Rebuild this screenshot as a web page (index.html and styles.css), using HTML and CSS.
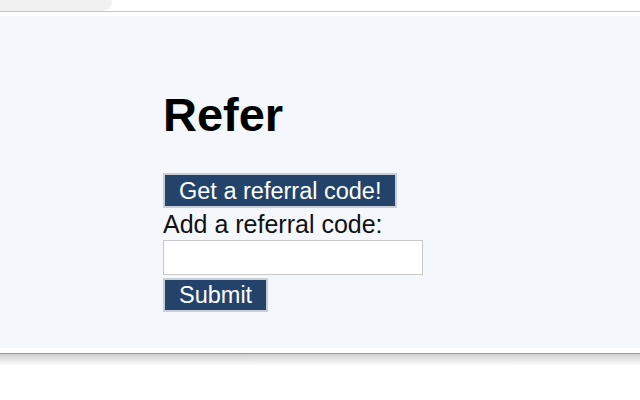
FILE: index.html
```html
<!DOCTYPE html>
<html>
<head>
<meta charset="utf-8">
<link rel="stylesheet" href="styles.css">
</head>
<body>
<div class="topbar"><div class="tab"></div></div>
<div class="frame">
  <main class="panel">
    <h1 class="title">Refer</h1>
    <button class="btn btn-get">Get a referral code!</button>
    <label class="label" for="code">Add a referral code:</label>
    <input class="input" id="code" type="text">
    <button class="btn btn-submit">Submit</button>
  </main>
</div>
<div class="shadow"></div>
</body>
</html>
```
FILE: styles.css
```css
html, body {
  margin: 0;
  padding: 0;
  background: #ffffff;
  width: 640px;
  height: 400px;
  overflow: hidden;
  font-family: "Liberation Sans", Arial, sans-serif;
}
.topbar {
  height: 11px;
  border-bottom: 1px solid #c6c6c6;
}
.tab {
  width: 112px;
  height: 11px;
  background: #f0f0f0;
  border-bottom-right-radius: 10px;
}
.frame {
  padding: 4px 0 5px 0;
  border-bottom: 1px solid #9a9a9a;
}
.panel {
  background: #f4f7fb;
  height: 332px;
  box-sizing: border-box;
  padding: 73px 0 0 163px;
  display: flex;
  flex-direction: column;
  align-items: flex-start;
}
.title {
  margin: 0 0 33px 0;
  font-size: 47px;
  line-height: 51px;
  font-weight: bold;
  color: #000;
}
.btn {
  background: #23436b;
  color: #ffffff;
  border: 2px solid #c9ced6;
  font-family: "Liberation Sans", Arial, sans-serif;
  font-size: 23.5px;
  line-height: 30px;
  height: 35px;
  padding: 0 14px;
  margin: 0;
  box-sizing: border-box;
}
.label {
  font-size: 25px;
  line-height: 32px;
  color: #111;
}
.input {
  width: 260px;
  height: 35px;
  box-sizing: border-box;
  border: 1px solid #c8c8c8;
  background: #fff;
  margin: 0 0 3px 0;
}
.btn-submit {
  height: 34px;
}
.shadow {
  height: 12px;
  background: linear-gradient(#d0d0d0, #ffffff);
}
```
